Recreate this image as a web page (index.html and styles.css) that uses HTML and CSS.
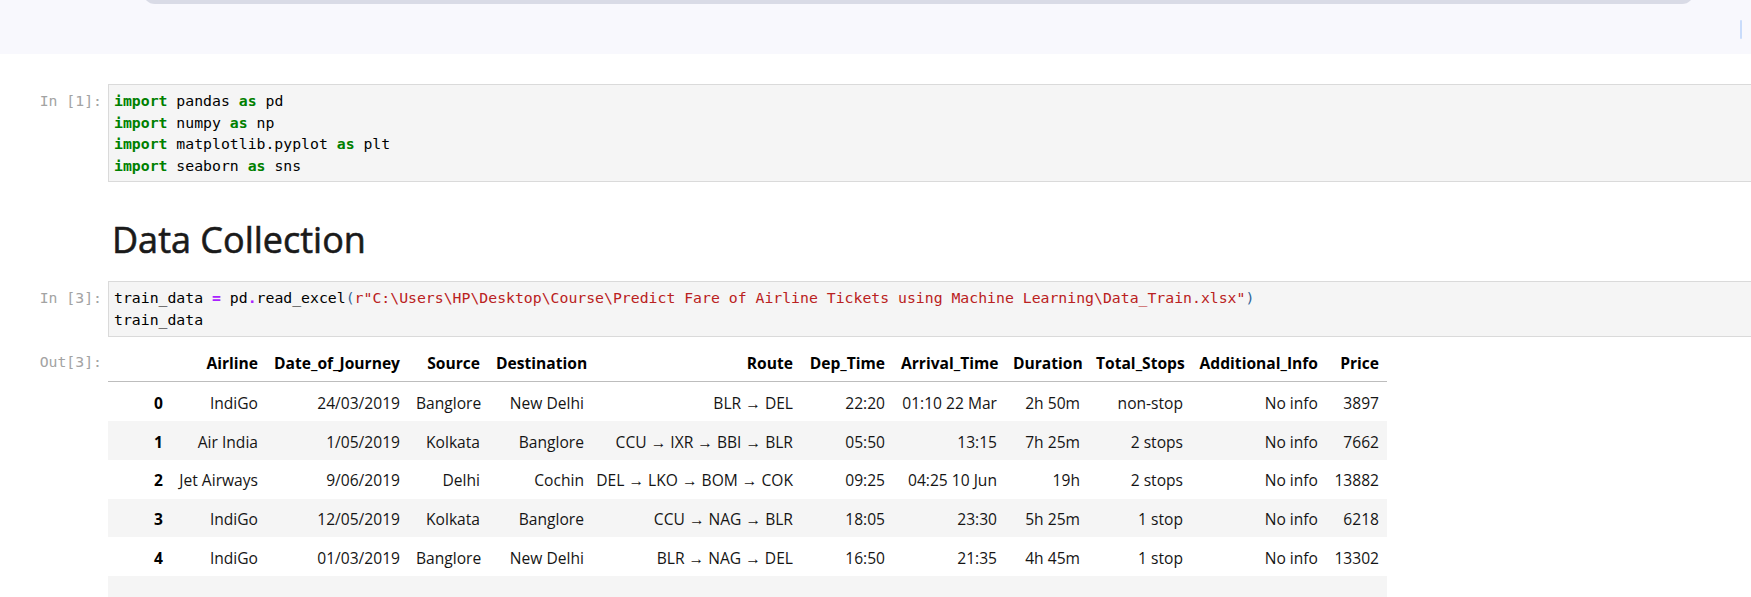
FILE: index.html
```html
<!DOCTYPE html>
<html lang="en">
<head>
<meta charset="utf-8">
<title>Notebook</title>
<link rel="stylesheet" href="styles.css">
</head>
<body>
<div class="topband">
  <div class="topbar"></div>
  <div class="caret"></div>
</div>
<div class="notebook">
  <div class="cell code-cell c1">
    <div class="prompt">In [1]:</div>
    <div class="input-area"><pre><span class="kw">import</span> pandas <span class="kw">as</span> pd
<span class="kw">import</span> numpy <span class="kw">as</span> np
<span class="kw">import</span> matplotlib.pyplot <span class="kw">as</span> plt
<span class="kw">import</span> seaborn <span class="kw">as</span> sns</pre></div>
  </div>
  <div class="cell md-cell">
    <div class="prompt"></div>
    <h1>Data Collection</h1>
  </div>
  <div class="cell code-cell c2">
    <div class="prompt">In [3]:</div>
    <div class="input-area"><pre>train_data <span class="op">=</span> pd<span class="op">.</span>read_excel<span class="br">(</span><span class="str">r"C:\Users\HP\Desktop\Course\Predict Fare of Airline Tickets using Machine Learning\Data_Train.xlsx"</span><span class="br">)</span>
train_data</pre></div>
  </div>
  <div class="cell output">
    <div class="prompt out">Out[3]:</div>
    <div class="output-area">
      <table class="df">
        <colgroup>
          <col class="w-idx"><col class="w-airline"><col class="w-date"><col class="w-source"><col class="w-dest"><col class="w-route"><col class="w-dep"><col class="w-arr"><col class="w-dur"><col class="w-stops"><col class="w-info"><col class="w-price">
        </colgroup>
        <thead>
          <tr><th></th><th>Airline</th><th>Date_of_Journey</th><th>Source</th><th>Destination</th><th>Route</th><th>Dep_Time</th><th>Arrival_Time</th><th>Duration</th><th>Total_Stops</th><th>Additional_Info</th><th>Price</th></tr>
        </thead>
        <tbody>
          <tr><th>0</th><td>IndiGo</td><td>24/03/2019</td><td>Banglore</td><td>New Delhi</td><td>BLR → DEL</td><td>22:20</td><td>01:10 22 Mar</td><td>2h 50m</td><td>non-stop</td><td>No info</td><td>3897</td></tr>
          <tr><th>1</th><td>Air India</td><td>1/05/2019</td><td>Kolkata</td><td>Banglore</td><td>CCU → IXR → BBI → BLR</td><td>05:50</td><td>13:15</td><td>7h 25m</td><td>2 stops</td><td>No info</td><td>7662</td></tr>
          <tr><th>2</th><td>Jet Airways</td><td>9/06/2019</td><td>Delhi</td><td>Cochin</td><td>DEL → LKO → BOM → COK</td><td>09:25</td><td>04:25 10 Jun</td><td>19h</td><td>2 stops</td><td>No info</td><td>13882</td></tr>
          <tr><th>3</th><td>IndiGo</td><td>12/05/2019</td><td>Kolkata</td><td>Banglore</td><td>CCU → NAG → BLR</td><td>18:05</td><td>23:30</td><td>5h 25m</td><td>1 stop</td><td>No info</td><td>6218</td></tr>
          <tr><th>4</th><td>IndiGo</td><td>01/03/2019</td><td>Banglore</td><td>New Delhi</td><td>BLR → NAG → DEL</td><td>16:50</td><td>21:35</td><td>4h 45m</td><td>1 stop</td><td>No info</td><td>13302</td></tr>
          <tr class="blank"><th>&nbsp;</th><td>&nbsp;</td><td>&nbsp;</td><td>&nbsp;</td><td>&nbsp;</td><td>&nbsp;</td><td>&nbsp;</td><td>&nbsp;</td><td>&nbsp;</td><td>&nbsp;</td><td>&nbsp;</td><td>&nbsp;</td></tr>
        </tbody>
      </table>
    </div>
  </div>
</div>
</body>
</html>
```
FILE: styles.css
```css
html, body {
  margin: 0;
  padding: 0;
  background: #ffffff;
  overflow: hidden;
}

body {
  font-family: "Open Sans", "Noto Sans", sans-serif;
  color: #111111;
}

.topband {
  position: relative;
  height: 54px;
  background: #f8f8fd;
  overflow: hidden;
}

.topbar {
  height: 16px;
  margin: -12px 57px 0 143px;
  background: #d9dbe6;
  border-radius: 0 0 12px 12px;
}

.caret {
  position: absolute;
  left: 1740px;
  top: 20px;
  width: 2px;
  height: 19px;
  background: #c9dcfb;
  border-radius: 1px;
}

.notebook {
  padding-top: 30px;
}

.cell {
  display: flex;
  align-items: flex-start;
}

.prompt {
  flex: 0 0 108px;
  box-sizing: border-box;
  padding-right: 6px;
  text-align: right;
  font-family: "DejaVu Sans Mono", monospace;
  font-size: 14.8px;
  line-height: 21.6px;
  color: #a3a3a3;
  white-space: pre;
}

.code-cell .prompt {
  padding-top: 6px;
}

.input-area {
  flex: 1;
  min-width: 0;
  background: #f5f5f5;
  border: 1px solid #dadada;
  border-right: none;
  padding: 5px 0 5px 5px;
}

.input-area pre {
  margin: 0;
  font-family: "DejaVu Sans Mono", monospace;
  font-size: 14.8px;
  line-height: 21.6px;
  color: #000000;
  white-space: pre;
}

.kw {
  color: #008000;
  font-weight: bold;
}

.op {
  color: #aa22ff;
  font-weight: bold;
}

.str {
  color: #ba2121;
}

.br {
  color: #336699;
}

.md-cell {
  margin-top: 40px;
}

.md-cell h1 {
  margin: 0;
  padding-left: 4px;
  font-family: "Open Sans", "Noto Sans", sans-serif;
  font-weight: 400;
  font-size: 36px;
  line-height: 36px;
  color: #1a1a1a;
  -webkit-text-stroke: 0.6px #1a1a1a;
}

.c2 {
  margin-top: 23px;
}

.output {
  margin-top: 6px;
}

.prompt.out {
  padding-top: 8px;
}

.output-area {
  flex: 1;
  min-width: 0;
}

.df {
  border-collapse: collapse;
  table-layout: fixed;
  width: 1279px;
  font-size: 15.6px;
  line-height: 22.75px;
  color: #151515;
}

.df th,
.df td {
  padding: 9.5px 8px 6.5px 8px;
  text-align: right;
  white-space: nowrap;
}

.df td:nth-child(6) {
  padding-left: 2px;
}

.df th {
  font-weight: 700;
  color: #000000;
}

.df thead {
  border-bottom: 1px solid #bdbdbd;
}

.df tbody tr:nth-child(even) {
  background: #f5f5f5;
}

.w-idx { width: 63px; }
.w-airline { width: 95px; }
.w-date { width: 142px; }
.w-source { width: 80px; }
.w-dest { width: 104px; }
.w-route { width: 209px; }
.w-dep { width: 92px; }
.w-arr { width: 112px; }
.w-dur { width: 83px; }
.w-stops { width: 103px; }
.w-info { width: 135px; }
.w-price { width: 61px; }
```
